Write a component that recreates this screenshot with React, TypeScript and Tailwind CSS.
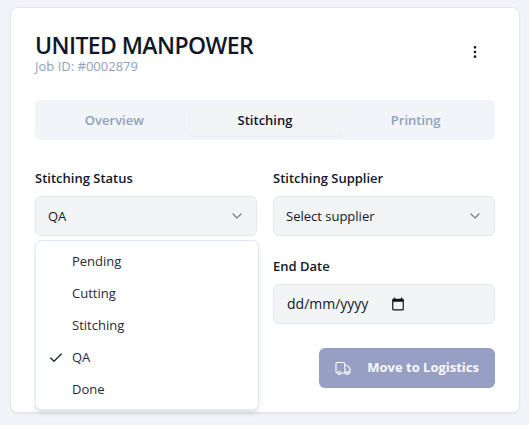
import { useState } from "react";
import type { ReactNode } from "react";
import { Check, ChevronDown, EllipsisVertical } from "lucide-react";

const tabs = ["Overview", "Stitching", "Printing"];
const statuses = ["Pending", "Cutting", "Stitching", "QA", "Done"];
const suppliers = ["Select supplier"];

function TruckIcon() {
  return (
    <svg viewBox="0 0 16 16" className="size-4" fill="none" stroke="currentColor" strokeWidth="1.200" strokeLinecap="round" strokeLinejoin="round" aria-hidden="true">
      <path d="M2.800 13H2.200A1.200 1.200 0 0 1 1 11.800V3.700A1.200 1.200 0 0 1 2.200 2.500H8.600A1.200 1.200 0 0 1 9.800 3.700V13H5.800" />
      <path d="M9.800 5.500H11.500C12.600 5.500 15 8 15 9.500V12A1 1 0 0 1 14 13M9.800 13H11" />
      <circle cx="4.300" cy="13" r="1.400" />
      <circle cx="12.500" cy="13" r="1.400" />
    </svg>
  );
}

function Field({ id, label, className = "", children }: { id: string; label: string; className?: string; children: ReactNode }) {
  return (
    <div className={`relative flex min-w-0 flex-col ${className}`}>
      <label htmlFor={id} className="pt-0.5 pb-1.5 text-[13px] leading-6 font-semibold">
        {label}
      </label>
      {children}
    </div>
  );
}

const boxClass = "h-10 w-full rounded-md border border-slate-200 bg-gray-100";

export default function App() {
  const [tab, setTab] = useState("Stitching");
  const [status, setStatus] = useState("QA");
  const [open, setOpen] = useState(true);
  const [supplier, setSupplier] = useState(suppliers[0]);
  const [endDate, setEndDate] = useState("");

  return (
    <div className="min-h-screen bg-[#f1f3f8] pt-[7px] pr-[9px] pb-3 pl-[10px] font-['Open_Sans','Noto_Sans',sans-serif] text-slate-900">
      <main className="rounded-lg border border-slate-200 bg-white p-6 shadow-xs">
        <header className="mb-6 flex items-start justify-between">
          <div>
            <h1 className="pt-px text-[23px] leading-6 font-semibold tracking-tight">UNITED MANPOWER</h1>
            <p className="text-[13px] leading-[19px] text-slate-400">Job ID: #0002879</p>
          </div>
          <button type="button" aria-label="More options" className="flex size-10 items-center justify-center rounded-md">
            <EllipsisVertical className="size-4" />
          </button>
        </header>

        <div role="tablist" className="mb-6 flex h-10 rounded-md bg-slate-100 p-1">
          {tabs.map((name) => (
            <button
              key={name}
              type="button"
              role="tab"
              aria-selected={tab === name}
              onClick={() => setTab(name)}
              className={`flex-1 rounded-sm text-[13px] leading-5 font-semibold ${
                tab === name ? "bg-gray-100 shadow-xs" : "text-slate-400"
              }`}
            >
              {name}
            </button>
          ))}
        </div>

        <div className="grid grid-cols-2 gap-4">
          <Field id="status" label="Stitching Status">
            <div className="relative">
              <select
                id="status"
                value={status}
                onChange={(e) => setStatus(e.target.value)}
                onMouseDown={(e) => {
                  e.preventDefault();
                  setOpen(!open);
                }}
                className={`${boxClass} appearance-none px-3 pt-px text-[13px]`}
              >
                {statuses.map((s) => (
                  <option key={s}>{s}</option>
                ))}
              </select>
              <ChevronDown className="pointer-events-none absolute top-3 right-3 size-4 opacity-50" />
            </div>
            {open && (
              <ul
                role="listbox"
                aria-label="Stitching Status"
                className="absolute top-full left-0 z-10 mt-1 w-56 rounded-md border border-slate-200 bg-white p-1 text-slate-800 shadow-md"
              >
                {statuses.map((s) => (
                  <li
                    key={s}
                    role="option"
                    aria-selected={s === status}
                    onClick={() => {
                      setStatus(s);
                      setOpen(false);
                    }}
                    className="flex h-8 items-center gap-2 pt-px pl-2 text-[13px]"
                  >
                    <span className="flex size-4 items-center">{s === status && <Check className="size-4" />}</span>
                    {s}
                  </li>
                ))}
              </ul>
            )}
          </Field>

          <Field id="supplier" label="Stitching Supplier">
            <div className="relative">
              <select
                id="supplier"
                value={supplier}
                onChange={(e) => setSupplier(e.target.value)}
                className={`${boxClass} appearance-none px-3 pt-px text-[13px]`}
              >
                {suppliers.map((s) => (
                  <option key={s}>{s}</option>
                ))}
              </select>
              <ChevronDown className="pointer-events-none absolute top-3 right-3 size-4 opacity-50" />
            </div>
          </Field>

          <Field id="end-date" label="End Date" className="col-start-2">
            <div className={`${boxClass} flex items-center px-3`}>
              <input
                id="end-date"
                type="text"
                inputMode="numeric"
                placeholder="dd/mm/yyyy"
                value={endDate}
                onChange={(e) => setEndDate(e.target.value)}
                className="w-[104px] bg-transparent pl-px text-sm outline-none placeholder:text-slate-900"
              />
              <button type="button" aria-label="Open calendar" className="flex size-4 items-center justify-center">
                <svg viewBox="0 0 24 24" className="size-3.5" fill="#111111">
                  <path d="M20 3h-1V1h-2v2H7V1H5v2H4c-1.100 0-2 .9-2 2v16c0 1.100.9 2 2 2h16c1.100 0 2-.9 2-2V5c0-1.100-.9-2-2-2zm0 18H4V8h16v13z" />
                </svg>
              </button>
            </div>
          </Field>
        </div>

        <div className="mt-6 flex justify-end">
          <button type="button" className="flex h-10 items-center gap-4 rounded-md bg-[#989fc5] px-4 text-[13px] font-bold text-slate-50">
            <TruckIcon />
            Move to Logistics
          </button>
        </div>
      </main>
    </div>
  );
}
